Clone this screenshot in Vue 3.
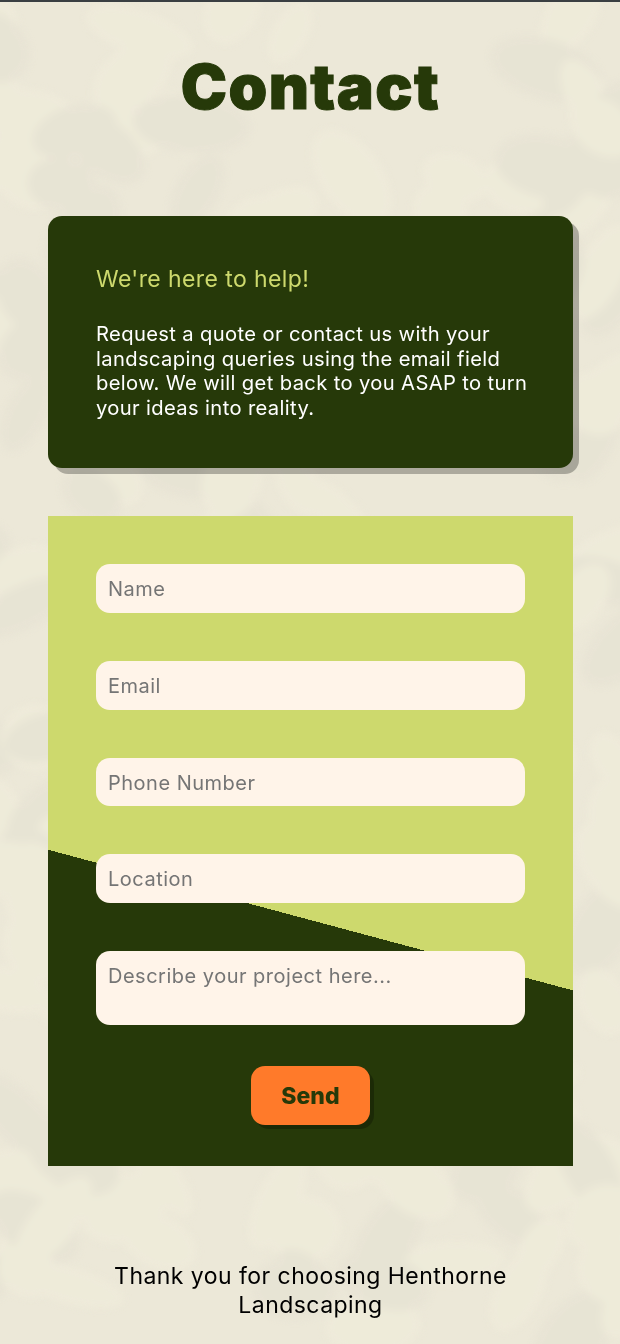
<script setup>
// faint leaf texture behind the page, generated so the markup stays short
let seed = 17;
const rnd = (min, max) => {
  seed = (seed * 16807) % 2147483647;
  return min + (seed / 2147483647) * (max - min);
};
const leaves = Array.from({ length: 200 }, (_, i) => ({
  id: i,
  cx: rnd(-20, 640),
  cy: rnd(0, 1344),
  rx: rnd(26, 62),
  ry: rnd(18, 34),
  rot: rnd(-70, 70),
  fill: i % 3 === 0 ? '#e7e3d4' : '#efebda',
}));
const fields = ['Name', 'Email', 'Phone Number', 'Location'];
</script>

<template>
  <div class="page">
    <svg class="texture" width="620" height="1344" viewBox="0 0 620 1344" aria-hidden="true">
      <g filter="url(#soft)" opacity="0.8">
        <ellipse
          v-for="l in leaves"
          :key="l.id"
          :cx="l.cx"
          :cy="l.cy"
          :rx="l.rx"
          :ry="l.ry"
          :fill="l.fill"
          :transform="`rotate(${l.rot} ${l.cx} ${l.cy})`"
        />
      </g>
      <defs>
        <filter id="soft"><feGaussianBlur stdDeviation="3.5" /></filter>
      </defs>
    </svg>

    <main class="content">
      <h1 class="title">Contact</h1>

      <section class="intro">
        <h2>We're here to help!</h2>
        <p>Request a quote or contact us with your landscaping queries using the email field below. We will get back to you ASAP to turn your ideas into reality.</p>
      </section>

      <form class="contact-form" @submit.prevent>
        <input v-for="f in fields" :key="f" type="text" :placeholder="f" />
        <textarea placeholder="Describe your project here..."></textarea>
        <button type="submit">Send</button>
      </form>

      <footer class="thanks">Thank you for choosing Henthorne Landscaping</footer>
    </main>
  </div>
</template>

<style>
html, body {
  margin: 0;
  background: #ece8d8;
}
</style>

<style scoped>
.page {
  position: relative;
  width: 620px;
  height: 1344px;
  overflow: hidden;
  background: #ece8d8;
  border-top: 2px solid #3a3f42;
  box-sizing: border-box;
  font-family: Inter, "Liberation Sans", sans-serif;
}

.texture {
  position: absolute;
  top: 0;
  left: 0;
}

.content {
  position: relative;
  display: flex;
  flex-direction: column;
  padding: 0 47px 0 48px;
}

.title {
  margin: 54px 0 0;
  font-family: Inter, "Liberation Sans", sans-serif;
  font-size: 62px;
  line-height: 62px;
  font-weight: 900;
  letter-spacing: 1.4px;
  text-align: center;
  color: #263909;
  -webkit-text-stroke: 1px #263909;
}

.intro {
  margin-top: 98px;
  height: 252px;
  box-sizing: border-box;
  padding: 48px;
  border-radius: 14px;
  background: #263909;
  box-shadow: 6px 6px 0 rgba(0, 0, 0, 0.27);
}

.intro h2 {
  margin: 0;
  font-size: 23px;
  line-height: 30px;
  font-weight: 400;
  letter-spacing: 0.4px;
  color: #cdd96d;
}

.intro p {
  margin: 28px -4px 0 0;
  font-size: 20.2px;
  line-height: 24.6px;
  letter-spacing: 0.36px;
  color: #fff;
}

.contact-form {
  margin-top: 48px;
  height: 649.5px;
  box-sizing: border-box;
  padding: 48px;
  display: flex;
  flex-direction: column;
  background: linear-gradient(195deg, #cdd96d 60%, #263909 60%);
}

.contact-form input,
.contact-form textarea {
  display: block;
  width: 100%;
  box-sizing: border-box;
  border: none;
  outline: none;
  resize: none;
  padding: 12.6px 12px 11.4px;
  margin-bottom: 48px;
  border-radius: 14px;
  background: #fff4e9;
  font-family: Inter, "Liberation Sans", sans-serif;
  font-size: 20px;
  line-height: 24.6px;
  letter-spacing: 0.5px;
  color: #222;
}

.contact-form input {
  height: 48.8px;
  flex: none;
}

.contact-form textarea {
  height: 73.6px;
  flex: none;
  margin-bottom: 41px;
}

.contact-form input::placeholder,
.contact-form textarea::placeholder {
  color: #757575;
  opacity: 1;
}

.contact-form button {
  align-self: center;
  flex: none;
  width: 119px;
  height: 59px;
  padding: 2px 0 0;
  border: none;
  border-radius: 14px;
  background: #ff7a2a;
  box-shadow: 4px 4px 0 rgba(0, 0, 0, 0.25);
  font-family: Inter, "Liberation Sans", sans-serif;
  font-size: 23px;
  font-weight: 800;
  color: #263909;
}

.thanks {
  margin: 96.5px auto 0;
  width: 440px;
  font-size: 23px;
  line-height: 29px;
  letter-spacing: 0.45px;
  text-align: center;
  color: #000;
}
</style>
